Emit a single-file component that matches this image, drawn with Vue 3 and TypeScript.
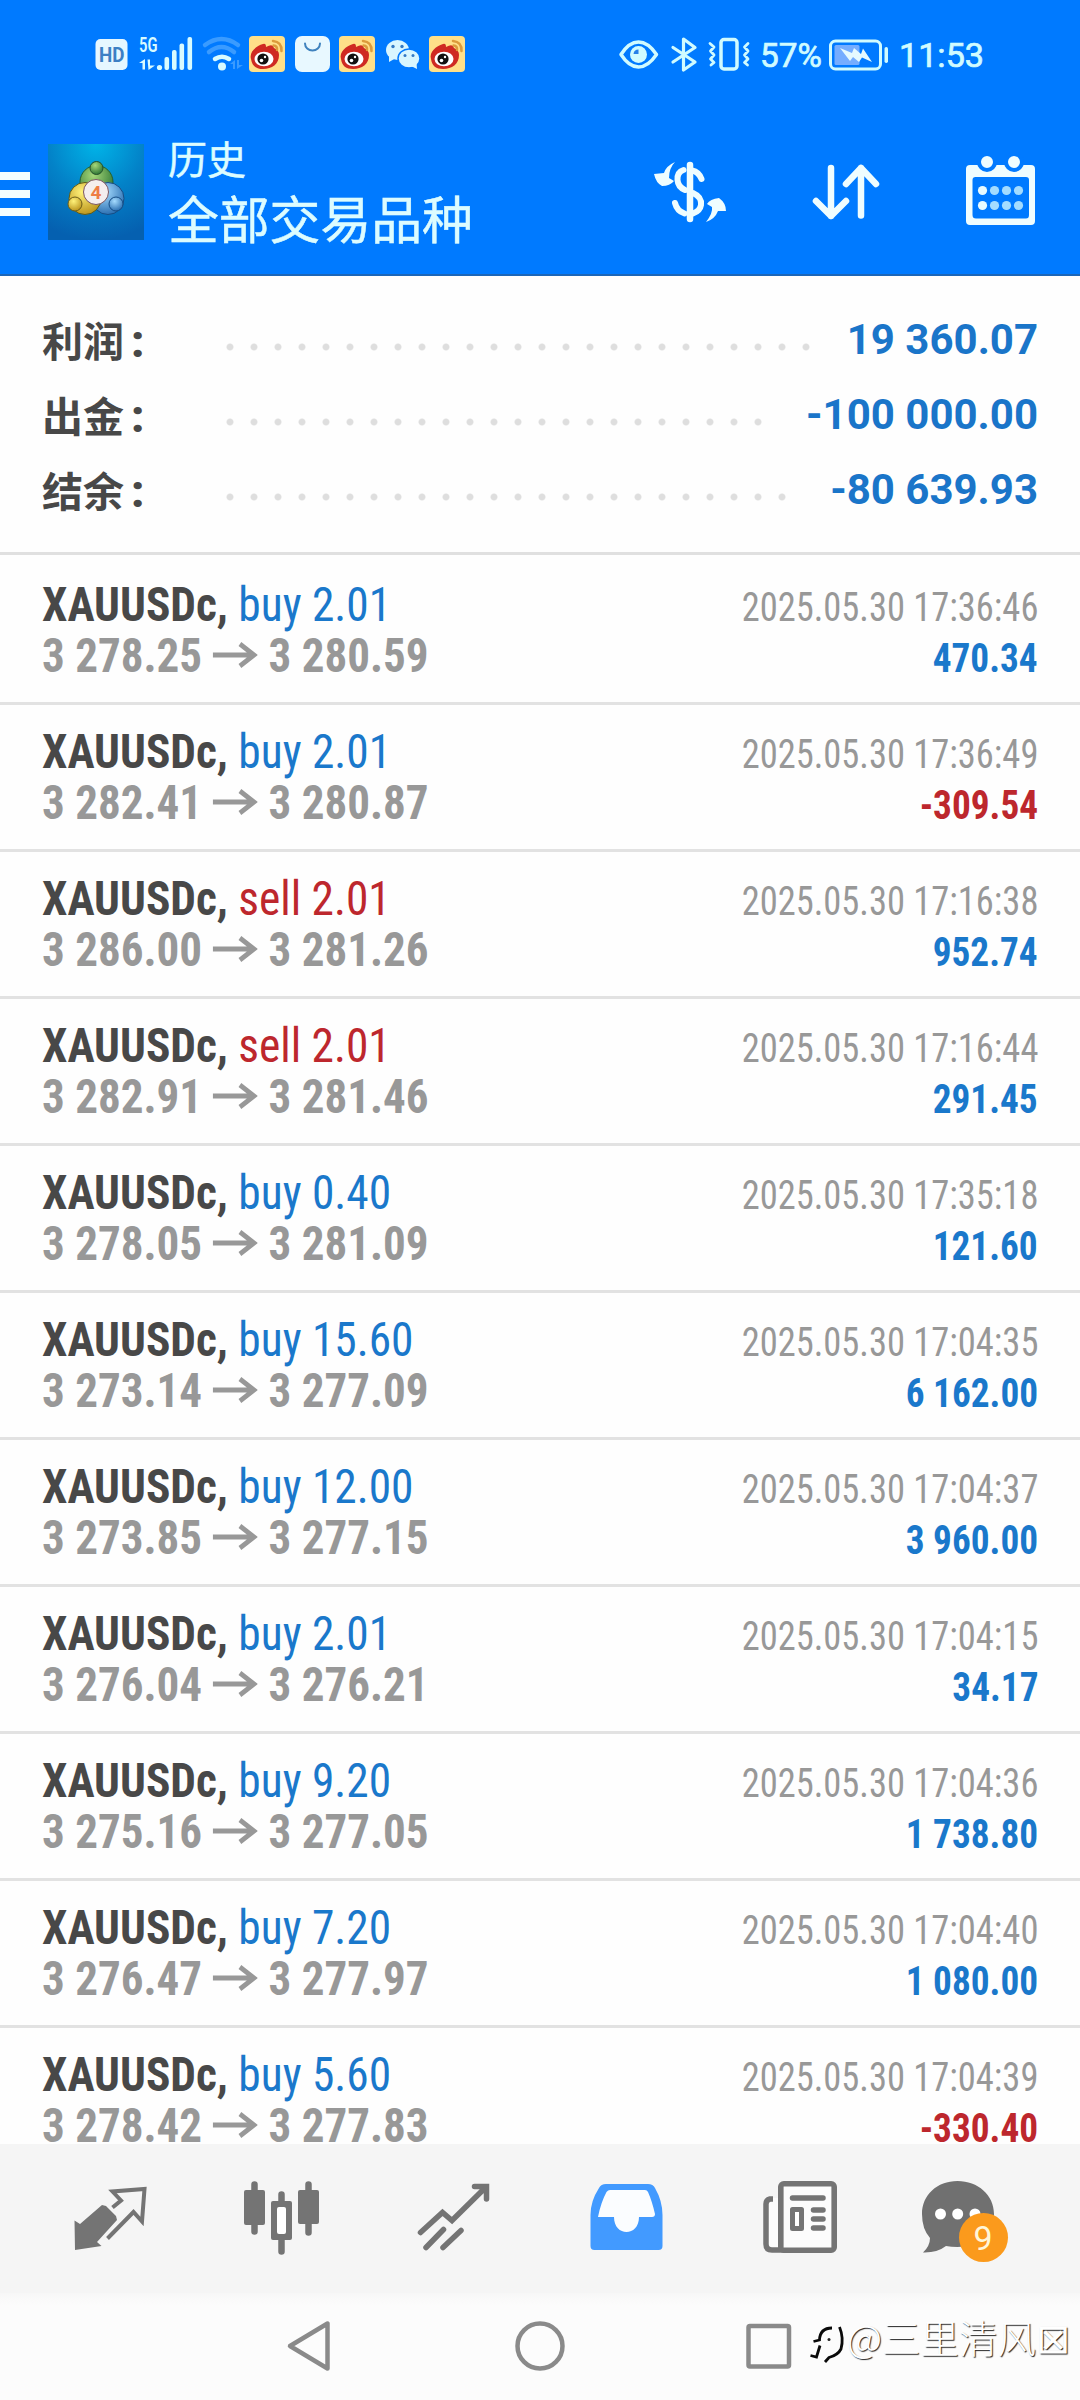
<script setup lang="ts">
interface Summary { label: string; value: string; dots: number }
interface Deal { side: 'buy' | 'sell'; volume: string; open: string; close: string; time: string; profit: string }

const summaries: Summary[] = [
  { label: '利润', value: '19 360.07', dots: 25 },
  { label: '出金', value: '-100 000.00', dots: 23 },
  { label: '结余', value: '-80 639.93', dots: 24 },
]

const deals: Deal[] = [
  { side: 'buy', volume: '2.01', open: '3 278.25', close: '3 280.59', time: '17:36:46', profit: '470.34' },
  { side: 'buy', volume: '2.01', open: '3 282.41', close: '3 280.87', time: '17:36:49', profit: '-309.54' },
  { side: 'sell', volume: '2.01', open: '3 286.00', close: '3 281.26', time: '17:16:38', profit: '952.74' },
  { side: 'sell', volume: '2.01', open: '3 282.91', close: '3 281.46', time: '17:16:44', profit: '291.45' },
  { side: 'buy', volume: '0.40', open: '3 278.05', close: '3 281.09', time: '17:35:18', profit: '121.60' },
  { side: 'buy', volume: '15.60', open: '3 273.14', close: '3 277.09', time: '17:04:35', profit: '6 162.00' },
  { side: 'buy', volume: '12.00', open: '3 273.85', close: '3 277.15', time: '17:04:37', profit: '3 960.00' },
  { side: 'buy', volume: '2.01', open: '3 276.04', close: '3 276.21', time: '17:04:15', profit: '34.17' },
  { side: 'buy', volume: '9.20', open: '3 275.16', close: '3 277.05', time: '17:04:36', profit: '1 738.80' },
  { side: 'buy', volume: '7.20', open: '3 276.47', close: '3 277.97', time: '17:04:40', profit: '1 080.00' },
  { side: 'buy', volume: '5.60', open: '3 278.42', close: '3 277.83', time: '17:04:39', profit: '-330.40' },
]

const weiboOffsets: number[] = [249, 339, 429]
const dotColumns: number[] = [982.5, 994.5, 1006.5, 1018.5]
</script>

<template>
  <div class="screen">
    <header class="top">
      <div class="status">
        <svg class="status-left" viewBox="90 30 390 50" width="390" height="50">
          <rect x="95.5" y="39" width="32" height="31" rx="5" fill="#e6f7ff" />
          <text x="99" y="61.500" font-size="19.500" font-weight="700" fill="#3c7fc4" textLength="25.500" lengthAdjust="spacingAndGlyphs">HD</text>
          <text x="139" y="52" font-size="20.500" font-weight="600" fill="#d8fbff" textLength="18.500" lengthAdjust="spacingAndGlyphs">5G</text>
          <g fill="#d8fbff">
            <path d="M139 63 L145 59 V69.500 H142.500 V63 Z M147.500 59.500 H150 V65.500 H155 L148.500 70 Z" />
            <circle cx="159.500" cy="67.500" r="2.600" />
            <rect x="164.500" y="57" width="4.600" height="13" rx="2" />
            <rect x="172" y="50" width="4.600" height="20" rx="2" />
            <rect x="179.500" y="43.500" width="4.600" height="26.500" rx="2" />
            <rect x="187.500" y="37" width="4.600" height="33" rx="2" />
          </g>
          <g fill="none" stroke-width="4.500" stroke-linecap="round">
            <path d="M205 45 Q221.500 33 238 45" stroke="#3a9bff" />
            <path d="M209 52 Q221.500 42 234 52" stroke="#3a9bff" />
            <path d="M215 59 Q222 54.500 229 59" stroke="#d8fbff" />
          </g>
          <circle cx="222" cy="66.500" r="4" fill="#d8fbff" />
          <path d="M230 64 L235 60 V69 H233 V64 Z M237 60 H239 V65 H243 L237 69 Z" fill="#3a9bff" />
          <g v-for="x in weiboOffsets" :key="x" :transform="`translate(${x} 36)`">
            <rect width="36" height="36" rx="4" fill="#ffe089" />
            <path d="M4 24 C2 17 9 11 16 9 Q19 8 19 12 Q26 8 27 13 Q32 15 32 20 C32 29 25 34 16 34 C9 34 5 31 4 24Z" fill="#cf2a22" transform="translate(-2 -1)" />
            <ellipse cx="15" cy="23" rx="9.500" ry="7.300" fill="#fff" />
            <circle cx="14" cy="23" r="5.600" fill="#111" />
            <circle cx="12.500" cy="24.500" r="1.800" fill="#fff" />
            <circle cx="16" cy="21" r="1.200" fill="#fff" />
            <path d="M24 5 Q33 6 32.500 15 M24.500 9.500 Q28.500 10 28 14" fill="none" stroke="#dc9b3c" stroke-width="2.500" stroke-linecap="round" />
          </g>
          <rect x="295" y="36" width="35" height="36" rx="7" fill="#e8f8ff" />
          <path d="M305 43.500 A7.500 7 0 0 0 320 43.500" fill="none" stroke="#3f82be" stroke-width="2" stroke-linecap="round" />
          <g fill="#d8f6ff">
            <ellipse cx="397.500" cy="50" rx="11.500" ry="10" />
            <path d="M389 56 V62 L396 58 Z" />
            <ellipse cx="409" cy="58.500" rx="11" ry="9.500" stroke="#0079ff" stroke-width="1.500" />
            <path d="M411 66 L417 69 L416.500 63 Z" />
          </g>
          <g fill="#3279c4">
            <circle cx="393" cy="46.500" r="1.700" /><circle cx="402" cy="46.500" r="1.700" />
            <circle cx="405" cy="55.500" r="1.500" /><circle cx="413" cy="55.500" r="1.500" />
          </g>
        </svg>
        <svg class="status-right" viewBox="610 30 380 50" width="380" height="50">
          <g fill="none" stroke="#d0fbff" stroke-width="3.500" stroke-linejoin="round" stroke-linecap="round">
            <path d="M621 54.500 Q629 42 638.500 42 Q648 42 656.500 54.500 Q648 67 638.500 67 Q629 67 621 54.500Z" />
            <path d="M673 47.500 L695 62 L683.500 70 V39 L695 47.500 L673 62" stroke-width="3.200" />
            <rect x="721" y="39.500" width="16" height="29.500" rx="3" />
            <path d="M710 43.500 L714 47 L710.500 51 L714 55 L710.500 59 L714 62.500 L711 65 M748 43.500 L744.500 47 L748 51 L744.500 55 L748 59 L744.500 62.500 L747.500 65" stroke-width="2.800" />
            <rect x="830.500" y="41" width="50" height="28" rx="5" stroke-width="3" />
          </g>
          <circle cx="638.500" cy="54.500" r="8.500" fill="#d0fbff" />
          <path d="M633.500 54 A5 5 0 0 1 638.500 49.500 V54Z" fill="#2680e8" />
          <rect x="834.500" y="45" width="25" height="20" rx="1.500" fill="#75adff" />
          <path d="M840 48 L852 53 L854 48 L861 54 L863 48.500 L872 62 L862 57.500 L859 62 L853 57 L850 61 Z" fill="#e5faff" />
          <rect x="884.500" y="47" width="3.500" height="16" rx="1.700" fill="#d0fbff" />
          <text x="760" y="67" font-size="33" fill="#d0fbff" stroke="#d0fbff" stroke-width=".7" textLength="62" lengthAdjust="spacingAndGlyphs">57%</text>
          <text x="899" y="67" font-size="33" fill="#d0fbff" stroke="#d0fbff" stroke-width=".7" textLength="85" lengthAdjust="spacingAndGlyphs">11:53</text>
        </svg>
      </div>
      <div class="appbar">
        <div class="menu"><i /><i /><i /></div>
        <svg class="logo" viewBox="0 0 96 96" width="96" height="96">
          <defs>
            <radialGradient id="sky" cx=".5" cy="0" r="1">
              <stop offset="0" stop-color="#00b4e8" /><stop offset=".5" stop-color="#0382c8" /><stop offset="1" stop-color="#0560b0" />
            </radialGradient>
            <radialGradient id="green" cx=".4" cy=".3" r=".8"><stop offset="0" stop-color="#a7d879" /><stop offset="1" stop-color="#1f6a2c" /></radialGradient>
            <radialGradient id="gold" cx=".4" cy=".3" r=".8"><stop offset="0" stop-color="#fff27a" /><stop offset="1" stop-color="#b48a12" /></radialGradient>
            <radialGradient id="azure" cx=".4" cy=".3" r=".8"><stop offset="0" stop-color="#a6dcff" /><stop offset="1" stop-color="#1c62a8" /></radialGradient>
          </defs>
          <rect width="96" height="96" fill="url(#sky)" />
          <circle cx="48.500" cy="38" r="16.500" fill="url(#green)" stroke="#275f2c" />
          <circle cx="60" cy="54.500" r="16" fill="url(#azure)" stroke="#164d85" />
          <circle cx="37" cy="54.500" r="16" fill="url(#gold)" stroke="#5e5b18" />
          <circle cx="48.500" cy="24" r="6.500" fill="url(#green)" stroke="#24502a" />
          <circle cx="27" cy="60" r="7" fill="url(#gold)" stroke="#6b5c18" />
          <circle cx="68" cy="60" r="7" fill="url(#azure)" stroke="#164d85" />
          <circle cx="48" cy="48" r="12.500" fill="#f5eeee" stroke="#7b5560" />
          <text x="48" y="55" text-anchor="middle" font-size="19" font-weight="700" fill="#ee7d45">4</text>
        </svg>
        <div class="titles">
          <div class="subtitle">历史</div>
          <div class="title">全部交易品种</div>
        </div>
        <svg class="actions" viewBox="640 140 400 110" width="400" height="110">
          <g fill="none" stroke="#effdff" stroke-linecap="round" stroke-linejoin="round">
            <path d="M690 165 V219" stroke-width="6.500" />
            <path d="M683.500 170 Q677 172 677.500 180 Q678 187 685 190 M692 170.500 Q699 172 701.500 179 M675 203 Q677 211 684.500 213.500 M693 193 Q702 197 701 205 Q700 211 693 213.500" stroke-width="6" />
            <path d="M831 168 V216 M816 201 L831 216 L846 201 M861 215.500 V168 M846 184 L861 168 L876 184" stroke-width="6.500" />
          </g>
          <path d="M675 162 Q666 166 664 173 L654 174 Q656 183 662 186 Q670 186 674 181 L669 178 Q669 168 675 162Z M706 222 Q715 219 718 211 L726 211 Q726 203 719 198 Q710 199 707 204 L712 207 Q713 213 706 222Z" fill="#effdff" />
          <path fill-rule="evenodd" fill="#effdff" d="M970 165 H1031 Q1035 165 1035 169 V221 Q1035 225 1031 225 H970 Q966 225 966 221 V169 Q966 165 970 165Z M975.500 177 Q972.500 177 972.500 180 V215 Q972.500 218.500 976 218.500 H1026 Q1029 218.500 1029 215 V180 Q1029 177 1026 177Z" />
          <circle cx="987" cy="162" r="8" fill="#effdff" stroke="#007aff" stroke-width="4" />
          <circle cx="1014" cy="162" r="8" fill="#effdff" stroke="#007aff" stroke-width="4" />
          <g v-for="x in dotColumns" :key="x" :fill="x < 990 ? '#e8fbff' : '#a3dcff'">
            <circle :cx="x" cy="190.500" r="4.600" /><circle :cx="x" cy="205.500" r="4.600" />
          </g>
        </svg>
      </div>
    </header>

    <section class="summary">
      <div v-for="s in summaries" :key="s.label" class="sum-row">
        <span class="sum-label">{{ s.label }}<b>:</b></span>
        <span class="leader" :style="{ width: s.dots * 24 + 'px' }" />
        <span class="sum-value">{{ s.value }}</span>
      </div>
    </section>

    <main class="deals">
      <article v-for="(d, i) in deals" :key="i" class="deal">
        <div class="line">
          <span class="cond main"><b>XAUUSDc,</b> <span :class="d.side">{{ d.side }} {{ d.volume }}</span></span>
          <span class="cond right time">2025.05.30 {{ d.time }}</span>
        </div>
        <div class="line">
          <span class="cond main price">{{ d.open }}<svg class="arrow" viewBox="0 0 48 26" width="48" height="26"><path d="M0 13 H44 M29 2 L44 13 L29 24" fill="none" stroke="#989898" stroke-width="5" /></svg>{{ d.close }}</span>
          <span class="cond right profit" :class="d.profit.startsWith('-') ? 'sell' : 'buy'">{{ d.profit }}</span>
        </div>
      </article>
    </main>

    <nav class="tabs">
      <svg viewBox="24 2144 172 149">
        <path d="M74.500 2220.500 L80 2224 L102 2205 L106 2206 L116 2216 L117 2220 L97 2242 L101.500 2246 L75 2250Z" fill="#747474" />
        <path d="M112.500 2207.500 L121 2200.500 L112.500 2191.500 L144.500 2189 L142 2221.500 L133.500 2212 L107.500 2238.500" fill="none" stroke="#747474" stroke-width="4" />
      </svg>
      <svg viewBox="196 2144 172 149">
        <g stroke="#747474" stroke-width="6.500" stroke-linecap="round"><path d="M254.500 2184.500 V2231.500 M281.500 2194.500 V2251.500 M308.500 2184.500 V2232.500" /></g>
        <g fill="#747474"><rect x="244" y="2190" width="21" height="35" rx="2" /><rect x="271" y="2201" width="21" height="39" rx="2" /><rect x="298" y="2190" width="21" height="34" rx="2" /></g>
        <rect x="277" y="2207" width="9" height="27" rx="2" fill="#fff" />
      </svg>
      <svg viewBox="368 2144 172 149">
        <path d="M420.500 2232.500 L442.500 2212.500 L452 2220.500 L486 2187 M474.500 2186.500 H486.500 V2199 M426 2247.500 L443.500 2229.500 M443 2247.500 L461 2230.500" fill="none" stroke="#747474" stroke-width="5.500" stroke-linecap="round" />
      </svg>
      <svg viewBox="540 2144 172 149">
        <path d="M606 2184 H648 Q653 2184 655 2188 Q662.500 2201 662.500 2215 V2246 Q662.500 2250 658.500 2250 H594.500 Q590.500 2250 590.500 2246 V2215 Q590.500 2201 599 2188 Q601 2184 606 2184Z" fill="#429aff" />
        <path d="M610 2190 H645 Q647 2190 648 2192 Q652 2201 655 2214 Q655 2217 652 2217 H639 C639 2237 614 2237 614 2217 H598 Q601 2202 606.500 2192 Q608 2190 610 2190Z" fill="#fbfdff" />
      </svg>
      <svg viewBox="712 2144 172 149">
        <rect x="766" y="2198" width="14" height="50" fill="#fcfcfc" />
        <path d="M773 2199 H770 Q766 2200 766 2204 V2244 Q766 2250 772 2250 H790" fill="none" stroke="#747474" stroke-width="5.500" />
        <rect x="780.800" y="2183.800" width="53.400" height="66.400" rx="3" fill="#fcfcfc" stroke="#747474" stroke-width="5.600" />
        <path d="M792.500 2198 H823 M813.500 2210 H823 M813.500 2219 H823 M813.500 2228 H823" stroke="#747474" stroke-width="5.500" stroke-linecap="round" />
        <rect x="792.500" y="2209.500" width="9" height="19" fill="#fff" stroke="#747474" stroke-width="5" stroke-linejoin="round" />
      </svg>
      <svg viewBox="884 2144 172 149">
        <path d="M957.500 2181 C978 2181 994 2195 994 2214 C994 2234 978 2247 957.500 2247 Q951 2247 946 2246 Q937 2253 923 2252.500 Q930 2246 930 2238 Q922 2229 922 2214 C922 2195 937 2181 957.500 2181Z" fill="#707070" />
        <g fill="#fff"><circle cx="940.500" cy="2214" r="5.500" /><circle cx="957.700" cy="2214" r="5.500" /><circle cx="975" cy="2214" r="5.500" /></g>
        <circle cx="983.500" cy="2237.500" r="24.500" fill="#fb9a1c" />
        <text x="983" y="2250" text-anchor="middle" font-size="34" fill="#fff6d8">9</text>
      </svg>
    </nav>

    <footer class="sysnav">
      <svg viewBox="0 2293 1080 107" width="1080" height="107">
        <g fill="none" stroke="#8a8a8a" stroke-width="4.500" stroke-linejoin="round">
          <path d="M290 2346 L327.500 2323.500 V2368.500Z" />
          <circle cx="540" cy="2346" r="22.500" />
          <rect x="748.500" y="2326" width="40.500" height="40.500" rx="1.500" />
        </g>
        <g fill="none" stroke="#0a0a0a" stroke-width="2.800">
          <path d="M832 2328 Q820 2328 819.500 2340 L813.500 2341.500 M820 2345.500 L816.500 2357 L810.500 2355.500" />
          <path d="M839.500 2327 Q844 2338 841 2349 Q838 2355 829 2357.500 L825 2362" />
        </g>
        <circle cx="829" cy="2339.500" r="1.500" fill="#222" />
      </svg>
      <span class="mark">@三里清风<i>⊠</i></span>
    </footer>
  </div>
</template>

<style>
body { margin: 0; background: #fff; }
</style>

<style scoped>
.screen { width: 1080px; height: 2400px; overflow: hidden; display: flex; flex-direction: column; background: #fefefe; font-family: Roboto, "Noto Sans CJK SC", sans-serif; }
.top { height: 276px; box-sizing: border-box; background: #007aff; border-bottom: 2px solid #1c66b8; flex: none; }
.status { display: flex; justify-content: space-between; padding: 30px 90px 0 90px; height: 50px; }
.appbar { display: flex; align-items: flex-start; padding-top: 57px; }
.menu { width: 48px; margin-top: 35px; display: flex; flex-direction: column; gap: 10px; }
.menu i { width: 30px; height: 8px; background: #f4feff; }
.logo { margin-top: 7px; }
.titles { margin-left: 24px; width: 472px; color: #dcfcff; font-family: "Noto Sans CJK SC", sans-serif; -webkit-text-stroke: .5px #dcfcff; }
.subtitle { font-size: 39px; line-height: 40px; }
.title { font-size: 50.800px; line-height: 60px; margin-top: 10px; }
.actions { margin-top: 3px; }
.summary { height: 279px; box-sizing: border-box; padding: 26px 42px 0; border-bottom: 3px solid #e0e0e0; flex: none; }
.sum-row { height: 75px; display: flex; align-items: center; }
.sum-label { width: 176px; font: 700 41px/75px "Noto Sans CJK SC", sans-serif; color: #484848; }
.sum-label b { font-family: Roboto, sans-serif; font-weight: 900; font-size: 45px; line-height: 1; margin-left: 7px; }
.leader { height: 24px; margin-top: 15px; background: radial-gradient(circle at 12px 12px, #dedede 2.800px, transparent 4px) 0 0 / 24px 24px; }
.sum-value { margin-left: auto; font-size: 42px; font-weight: 700; color: #1a75c9; }
.deals { height: 1589px; overflow: hidden; flex: none; }
.deal { height: 147px; box-sizing: border-box; padding: 24px 42px 0; border-bottom: 3px solid #e2e2e2; }
.deal:first-child { height: 150px; padding-top: 27px; }
.line { height: 51px; display: flex; justify-content: space-between; align-items: flex-start; }
.cond { font-family: "Roboto Condensed", Roboto, sans-serif; font-stretch: 75%; white-space: pre; line-height: 51px; }
.main { font-size: 48px; line-height: 45px; color: #484848; transform: scaleX(.945); transform-origin: left; }
.main b { font-weight: 700; }
.price { font-weight: 700; color: #989898; transform: scaleX(.938); }
.arrow { margin: 0 12px 0 11px; vertical-align: 4px; }
.right { font-size: 40px; transform-origin: right; }
.time { color: #989898; transform: scaleX(.912); }
.profit { font-weight: 700; transform: scaleX(.932); }
.buy { color: #1a78cb; }
.sell { color: #bd272d; }
.tabs { height: 149px; padding: 0 24px; display: flex; background: #f5f5f5; flex: none; }
.tabs svg { width: 172px; height: 149px; }
.sysnav { position: relative; height: 107px; background: linear-gradient(#f7f7f7, #fcfcfc 12px); flex: none; }
.mark { position: absolute; left: 847px; top: 18px; font: 300 38.500px/50px "Noto Sans CJK SC", sans-serif; white-space: nowrap; color: #fff; text-shadow: 1px 1px 1px #222; }
.mark i { font: 300 41px/50px "DejaVu Sans", sans-serif; }
</style>
